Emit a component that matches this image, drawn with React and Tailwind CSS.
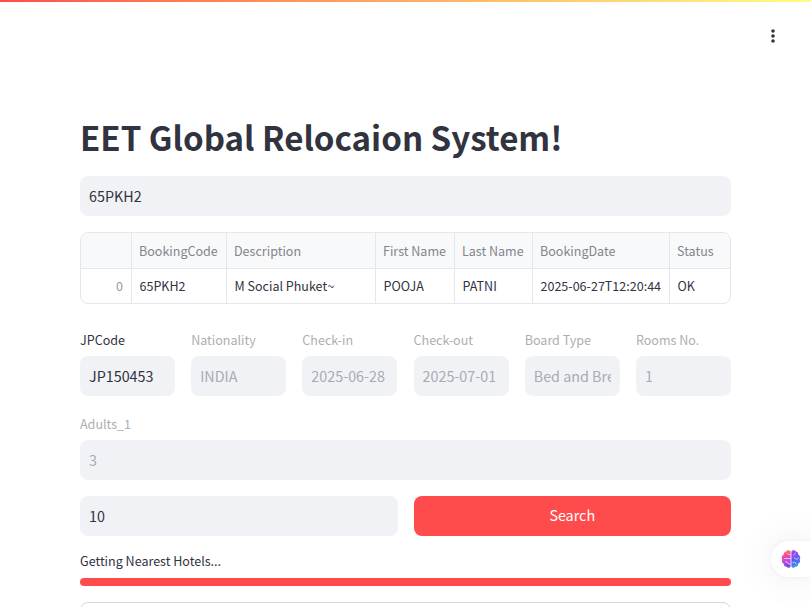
const columns = [
  { title: "", value: "0", cell: "w-[51px] border-r" },
  { title: "BookingCode", value: "65PKH2", cell: "w-[95px] border-r" },
  { title: "Description", value: "M Social Phuket~", cell: "w-[149px] border-r" },
  { title: "First Name", value: "POOJA", cell: "w-[79px] border-r" },
  { title: "Last Name", value: "PATNI", cell: "w-[78px] border-r" },
  { title: "BookingDate", value: "2025-06-27T12:20:44", cell: "w-[137px] border-r" },
  { title: "Status", value: "OK", cell: "w-[60px]" },
];

const fields = [
  { label: "JPCode", value: "JP150453" },
  { label: "Nationality", value: "INDIA", disabled: true },
  { label: "Check-in", value: "2025-06-28", disabled: true },
  { label: "Check-out", value: "2025-07-01", disabled: true },
  { label: "Board Type", value: "Bed and Breakfast", disabled: true },
  { label: "Rooms No.", value: "1", disabled: true },
];

function TextBox({ value, disabled }) {
  return (
    <div className="h-10 rounded-lg bg-[#f0f2f6] px-[9px]">
      <div
        className={`overflow-hidden whitespace-nowrap text-[14.33px] leading-[39px] ${
          disabled ? "text-[#a9abb3]" : "text-[#31333f]"
        }`}
      >
        {value}
      </div>
    </div>
  );
}

function Field({ label, value, disabled }) {
  return (
    <div className="min-w-0">
      <div
        className={`mb-1 h-6 whitespace-nowrap text-[12.54px] leading-[23px] ${
          disabled ? "text-[#adaeb2]" : "text-[#31333f]"
        }`}
      >
        {label}
      </div>
      <TextBox value={value} disabled={disabled} />
    </div>
  );
}

function BookingTable() {
  return (
    <div className="flex h-[72px] overflow-hidden rounded-lg border border-[#e6e7ea] text-[12.54px] whitespace-nowrap">
      {columns.map(({ title, value, cell }, i) => (
        <div key={i} className={`shrink-0 border-[#e6e7ea] ${cell}`}>
          <div className="h-9 border-b border-[#e6e7ea] bg-[#f8f9fb] pl-[7px] leading-[35px] text-[#83858c]">
            {title}
          </div>
          <div
            className={`h-[34px] leading-[33px] ${
              i === 0 ? "pr-2 text-right text-[#96979d]" : "pl-[7.5px] text-[#31333f]"
            }`}
          >
            {value}
          </div>
        </div>
      ))}
    </div>
  );
}

function BrainIcon() {
  return (
    <svg className="size-5" viewBox="0 0 20 20" fill="none">
      <defs>
        <linearGradient id="brain-left" x1="3" y1="1" x2="8" y2="19" gradientUnits="userSpaceOnUse">
          <stop stopColor="#ff9345" />
          <stop offset=".3" stopColor="#f14b9b" />
          <stop offset=".6" stopColor="#c848df" />
          <stop offset="1" stopColor="#6941e8" />
        </linearGradient>
        <linearGradient id="brain-right" x1="11" y1="2" x2="17" y2="18" gradientUnits="userSpaceOnUse">
          <stop stopColor="#a04be8" />
          <stop offset=".5" stopColor="#6656f0" />
          <stop offset="1" stopColor="#28a5fa" />
        </linearGradient>
      </defs>
      <path
        d="M9.6 2.6v14.9c-.7 1.5-3.4 1.7-4.2.1-1.5.1-2.7-1.2-2.4-2.7C1.2 14.2.4 12.2 1.3 10.7.2 9 .8 6.6 2.6 5.8 2.5 4 3.6 2.5 5.1 2.4 6 .8 8.9.9 9.6 2.6Z"
        fill="url(#brain-left)"
      />
      <path
        d="M10.400 2.6v14.9c.7 1.500 3.400 1.700 4.200.1 1.500.1 2.700-1.200 2.400-2.700 1.800-.7 2.600-2.700 1.700-4.200 1.100-1.700.5-4.100-1.300-4.900.1-1.800-1-3.300-2.500-3.400-.9-1.600-3.800-1.500-4.500.2Z"
        fill="url(#brain-right)"
      />
      <path
        d="M9.4 5.5H7.3L6.4 4.500M3.500 9.500h5.900M4.500 13l2 .2 1 1.800h1.900M12.800 6l1.800-1.800M13 8.500l1.500 1.400h2l1.500-1.400M12 13.500l1.800-.2 1.200 1.600"
        stroke="#e9d9ff"
        strokeWidth=".8"
        strokeLinecap="round"
        strokeLinejoin="round"
      />
    </svg>
  );
}

export default function App() {
  return (
    <div className="relative h-[607px] w-full overflow-hidden bg-white font-['Noto_Sans_CJK_SC',sans-serif] text-[#31333f]">
      <div className="h-0.5 bg-linear-to-r from-[#ff4b4b] to-[#fffd80]" />
      <header className="flex h-[68px] items-center justify-end pr-[34px]">
        <svg className="h-4 w-2" viewBox="0 0 8 16" fill="#31333f">
          <circle cx="4" cy="3" r="1.8" />
          <circle cx="4" cy="8" r="1.8" />
          <circle cx="4" cy="13" r="1.8" />
        </svg>
      </header>

      <main className="px-20 pt-[46px]">
        <h1 className="h-[60px] text-[33.08px] leading-[42px] font-bold whitespace-nowrap">
          EET Global Relocaion System!
        </h1>
        <div className="flex flex-col gap-4">
          <TextBox value="65PKH2" />
          <BookingTable />
          <div className="mt-2 grid grid-cols-6 gap-[16.1px]">
            {fields.map((field) => (
              <Field key={field.label} {...field} />
            ))}
          </div>
          <Field label="Adults_1" value="3" disabled />
          <div className="grid grid-cols-2 gap-4">
            <TextBox value="10" />
            <button className="h-10 rounded-lg bg-[#ff4b4b] text-[14.33px] leading-[40px] text-white">
              <span className="block h-10 leading-[38px]">Search</span>
            </button>
          </div>
          <div>
            <div className="h-[26px] text-[12.54px] leading-[18px]">Getting Nearest Hotels...</div>
            <div className="h-2 rounded-full bg-[#ff4b4b]" />
          </div>
          <div className="h-16 rounded-lg border border-[#d6d6d9]" />
        </div>
      </main>

      <div className="absolute top-[541px] right-0 flex h-9 w-10 items-center rounded-l-full bg-white pl-[10px] shadow-[0_0_40px_rgba(0,0,0,0.09),0_0_4px_rgba(0,0,0,0.05)]">
        <BrainIcon />
      </div>
    </div>
  );
}
